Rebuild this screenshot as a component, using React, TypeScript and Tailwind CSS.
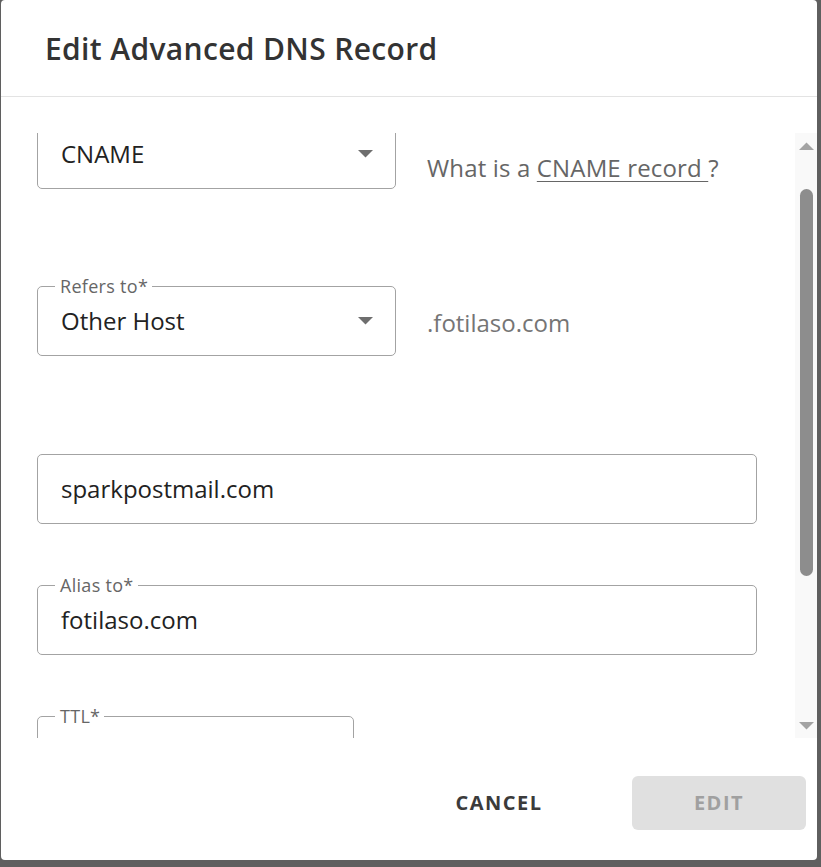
import React from 'react';

const font = { fontFamily: '"Open Sans", "Noto Sans", sans-serif' };

function Caret() {
    return (
        <svg width="15" height="8" viewBox="0 0 15 8" className="shrink-0">
            <path d="M0 0 L15 0 L7.5 7.5 Z" fill="#6e6e6e" />
        </svg>
    );
}

function SelectBox({ label, value }: { label?: string; value: string }) {
    if (!label) {
        return (
            <div className="flex h-[70px] w-[359px] items-center justify-between rounded-[5px] border border-[#a3a3a3] pl-[23px] pr-[22px]">
                <span className="text-[24px] text-[#222]">{value}</span>
                <Caret />
            </div>
        );
    }
    return (
        <fieldset className="w-[359px] rounded-[5px] border border-[#a3a3a3] pl-[23px] pr-[22px]">
            <legend className="-ml-[6px] pl-[5px] pr-[4px] text-[18px] leading-[18px] tracking-[0.3px] text-[#666]">{label}</legend>
            <div className="flex h-[60px] items-center justify-between pb-[8px]">
                <span className="text-[24px] text-[#222]">{value}</span>
                <Caret />
            </div>
        </fieldset>
    );
}

function TextBox({ label, value, width }: { label?: string; value: string; width: string }) {
    if (!label) {
        return (
            <div className={`flex h-[70px] items-center rounded-[5px] border border-[#a3a3a3] px-[23px] ${width}`}>
                <span className="text-[24px] text-[#222]">{value}</span>
            </div>
        );
    }
    return (
        <fieldset className={`rounded-[5px] border border-[#a3a3a3] px-[23px] ${width}`}>
            <legend className="-ml-[6px] pl-[5px] pr-[4px] text-[18px] leading-[18px] tracking-[0.3px] text-[#666]">{label}</legend>
            <div className="flex h-[60px] items-center pb-[8px]">
                <span className="text-[24px] text-[#222]">{value}</span>
            </div>
        </fieldset>
    );
}

function Scrollbar() {
    return (
        <div className="flex w-[22px] shrink-0 flex-col items-center bg-[#f9f9f9] pt-[9px] pb-[8px]">
            <svg width="15" height="8" viewBox="0 0 15 8">
                <path d="M0 8 L15 8 L7.5 0.5 Z" fill="#a3a3a3" />
            </svg>
            <div className="mt-[39px] h-[387px] w-[13px] rounded-full bg-[#8d8d8d]" />
            <div className="flex-1" />
            <svg width="15" height="8" viewBox="0 0 15 8">
                <path d="M0 0 L15 0 L7.5 7.5 Z" fill="#a3a3a3" />
            </svg>
        </div>
    );
}

export default function App() {
    return (
        <div className="h-[867px] w-[821px] overflow-hidden bg-[#5f5f5f] pl-[1px]" style={font}>
            <div className="flex h-[860px] w-[816px] flex-col rounded-[4px] bg-white">
                {/* Header */}
                <div className="flex h-[97px] shrink-0 items-center border-b border-[#e3e3e3] pl-[44px]">
                    <h2 className="text-[30px] font-semibold tracking-[0.35px] text-[#333]">Edit Advanced DNS Record</h2>
                </div>

                {/* Scrollable body */}
                <div className="mt-[36px] flex h-[605px] shrink-0">
                    <div className="flex-1 overflow-hidden pl-[36px] pr-[37px]">
                        <div className="-mt-[14px] flex flex-col">
                            <div className="flex items-start gap-[31px]">
                                <SelectBox value="CNAME" />
                                <p className="mt-[31px] text-[24px] tracking-[0.15px] text-[#666]">
                                    What is a <span className="underline decoration-1 underline-offset-[4px]">CNAME record </span>?
                                </p>
                            </div>

                            <div className="mt-[88px] flex items-start gap-[31px]">
                                <SelectBox label="Refers to*" value="Other Host" />
                                <p className="mt-[28px] text-[24px] text-[#757575]">.fotilaso.com</p>
                            </div>

                            <div className="mt-[98px]">
                                <TextBox value="sparkpostmail.com" width="w-[720px]" />
                            </div>

                            <div className="mt-[52px]">
                                <TextBox label="Alias to*" value="fotilaso.com" width="w-[720px]" />
                            </div>

                            <div className="mt-[52px]">
                                <TextBox label="TTL*" value="" width="w-[317px]" />
                            </div>
                        </div>
                    </div>
                    <Scrollbar />
                </div>

                {/* Footer */}
                <div className="flex flex-1 items-start justify-end gap-[46px] pt-[38px] pr-[11px]">
                    <button className="h-[54px] w-[174px] rounded-[6px] text-[20px] font-bold tracking-[1.5px] text-[#3b3b3b]">
                        CANCEL
                    </button>
                    <button className="h-[54px] w-[174px] rounded-[6px] bg-[#e0e0e0] text-[20px] font-bold tracking-[1.5px] text-[#a0a0a0]">
                        EDIT
                    </button>
                </div>
            </div>
        </div>
    );
}
